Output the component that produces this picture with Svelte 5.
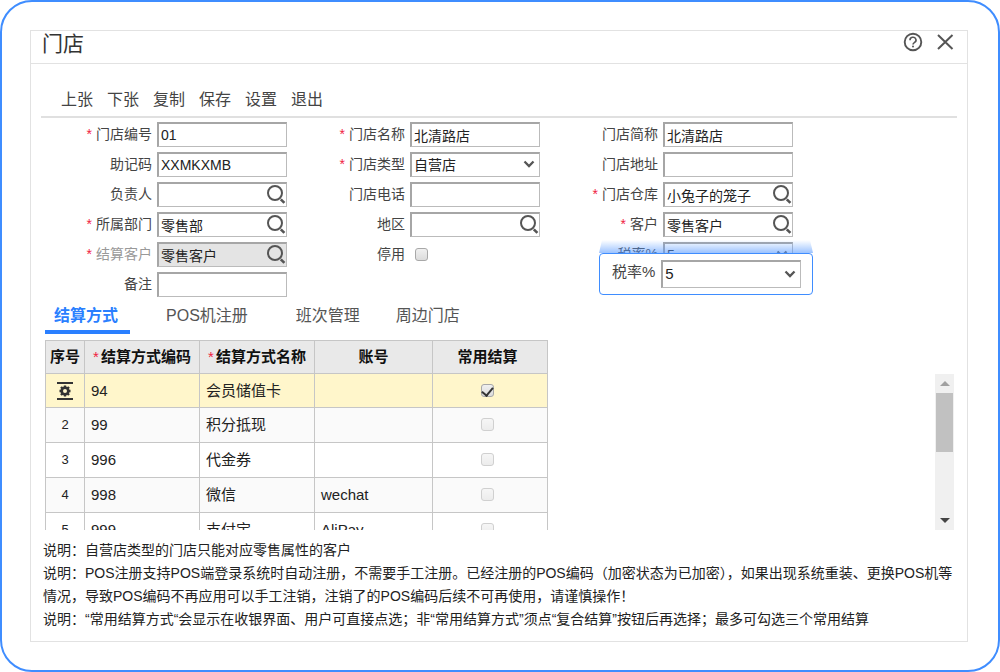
<script>
  const columns = [
    [
      { id: 'code', label: '门店编号', required: true, value: '01', kind: 'text' },
      { id: 'memo', label: '助记码', value: 'XXMKXMB', kind: 'text' },
      { id: 'owner', label: '负责人', value: '', kind: 'lookup' },
      { id: 'dept', label: '所属部门', required: true, value: '零售部', kind: 'lookup' },
      { id: 'settle', label: '结算客户', required: true, value: '零售客户', kind: 'lookup', disabled: true },
      { id: 'remark', label: '备注', value: '', kind: 'text' }
    ],
    [
      { id: 'name', label: '门店名称', required: true, value: '北清路店', kind: 'text' },
      { id: 'type', label: '门店类型', required: true, value: '自营店', kind: 'select' },
      { id: 'phone', label: '门店电话', value: '', kind: 'text' },
      { id: 'area', label: '地区', value: '', kind: 'lookup' },
      { id: 'stopped', label: '停用', kind: 'check' }
    ],
    [
      { id: 'short', label: '门店简称', value: '北清路店', kind: 'text' },
      { id: 'address', label: '门店地址', value: '', kind: 'text' },
      { id: 'store', label: '门店仓库', required: true, value: '小兔子的笼子', kind: 'lookup' },
      { id: 'customer', label: '客户', required: true, value: '零售客户', kind: 'lookup' },
      { id: 'tax', label: '税率%', value: '5', kind: 'select' }
    ]
  ];
  const actions = ['上张', '下张', '复制', '保存', '设置', '退出'];
  const tabs = ['结算方式', 'POS机注册', '班次管理', '周边门店'];
  let active = $state(0);
  const rows = [
    { no: 1, code: '94', name: '会员储值卡', account: '', common: true },
    { no: 2, code: '99', name: '积分抵现', account: '', common: false },
    { no: 3, code: '996', name: '代金券', account: '', common: false },
    { no: 4, code: '998', name: '微信', account: 'wechat', common: false },
    { no: 5, code: '999', name: '支付宝', account: 'AliPay', common: false }
  ];
</script>

{#snippet chevron()}
  <svg class="chevron" width="12" height="8" viewBox="0 0 12 8" aria-hidden="true">
    <path d="M1.500 1.500 6 6l4.500-4.500" fill="none" stroke="#555" stroke-width="2.300" />
  </svg>
{/snippet}

<main class="frame">
  <section class="dialog">
    <header>
      <h1>门店</h1>
      <button class="icon" aria-label="帮助">
        <svg width="20" height="20" viewBox="0 0 20 20">
          <circle cx="10" cy="10" r="8.300" fill="none" stroke="#555" stroke-width="1.900" />
          <path d="M7 8.200a3 2.800 0 1 1 4.600 2.200c-1 .7-1.600 1.200-1.600 2.200" fill="none" stroke="#555" stroke-width="1.600" />
          <circle cx="10" cy="14.600" r="1" fill="#555" />
        </svg>
      </button>
      <button class="icon" aria-label="关闭">
        <svg width="20" height="20" viewBox="0 0 20 20">
          <path d="M3 3 17.500 17M17.500 3 3 17" stroke="#555" stroke-width="2" />
        </svg>
      </button>
    </header>

    <nav class="toolbar">
      {#each actions as action}
        <button>{action}</button>
      {/each}
    </nav>

    <form>
      {#each columns as fields}
        <div class="column">
          {#each fields as field}
            <div class="field">
              <label for={field.id} class:muted={field.disabled}>
                {#if field.required}<span class="star">*</span>{/if}{field.label}
              </label>
              {#if field.kind === 'check'}
                <input class="tick" type="checkbox" id={field.id} />
              {:else if field.kind === 'select'}
                <div class="box">
                  <select id={field.id}><option>{field.value}</option></select>
                  {@render chevron()}
                </div>
              {:else}
                <div class="box" class:disabled={field.disabled}>
                  <input type="text" id={field.id} value={field.value} disabled={field.disabled} />
                  {#if field.kind === 'lookup'}
                    <button type="button" class="lookup" aria-label="查找{field.label}">
                      <svg width="20" height="22" viewBox="0 0 20 22">
                        <circle cx="9" cy="9" r="7" fill="none" stroke="#555" stroke-width="2" />
                        <path d="M14.800 15.300 18.400 18.900" stroke="#555" stroke-width="2.600" />
                      </svg>
                    </button>
                  {/if}
                </div>
              {/if}
            </div>
          {/each}
          {#if fields[4].id === 'tax'}
            <div class="callout">
              <div class="beam"></div>
              <div class="lens">
                <label for="taxzoom">税率%</label>
                <div class="box">
                  <select id="taxzoom"><option>5</option></select>
                  {@render chevron()}
                </div>
              </div>
            </div>
          {/if}
        </div>
      {/each}
    </form>

    <div class="tabs" role="tablist">
      {#each tabs as tab, i}
        <button role="tab" aria-selected={active === i} class:active={active === i} onclick={() => (active = i)}>{tab}</button>
      {/each}
    </div>

    <div class="grid">
      <table>
        <colgroup>
          <col class="c-no" /><col class="c-mid" /><col class="c-mid" /><col class="c-account" /><col class="c-mid" />
        </colgroup>
        <thead>
          <tr>
            <th>序号</th>
            <th><span class="star">*</span>结算方式编码</th>
            <th><span class="star">*</span>结算方式名称</th>
            <th>账号</th>
            <th class="center">常用结算</th>
          </tr>
        </thead>
        <tbody>
          {#each rows as row, i}
            <tr class:selected={i === 0}>
              <td class="no">
                {#if i === 0}
                  <svg width="16" height="20" viewBox="0 0 16 20" role="img" aria-label="行设置">
                    <path d="M0 2H16M0 18H16" stroke="#333" stroke-width="2" />
                    <circle cx="8" cy="10" r="3.300" fill="none" stroke="#333" stroke-width="2.600" />
                    <path d="M8 4.500v2M8 13.500v2M2.500 10h2M11.500 10h2M4 6l1.600 1.600M10.400 12.400l1.600 1.600M12 6l-1.600 1.600M5.600 12.400l-1.600 1.600" stroke="#333" stroke-width="2.400" />
                  </svg>
                {:else}{row.no}{/if}
              </td>
              <td>{row.code}</td>
              <td>{row.name}</td>
              <td>{row.account}</td>
              <td class="center">
                <input class="tick" class:faint={!row.common} type="checkbox" checked={row.common} aria-label="常用结算 {row.name}" />
              </td>
            </tr>
          {/each}
        </tbody>
      </table>
      <div class="scrollbar">
        <button aria-label="向上滚动"><svg width="10" height="5" viewBox="0 0 10 5"><path d="M5 0 10 5H0z" fill="#a0a0a0" /></svg></button>
        <div class="track"><div class="thumb"></div></div>
        <button aria-label="向下滚动"><svg width="10" height="5" viewBox="0 0 10 5"><path d="M0 0H10L5 5z" fill="#444" /></svg></button>
      </div>
    </div>

    <footer>
      <p>说明：自营店类型的门店只能对应零售属性的客户</p>
      <p>说明：POS注册支持POS端登录系统时自动注册，不需要手工注册。已经注册的POS编码（加密状态为已加密），如果出现系统重装、更换POS机等<br />情况，导致POS编码不再应用可以手工注销，注销了的POS编码后续不可再使用，请谨慎操作！</p>
      <p>说明：“常用结算方式“会显示在收银界面、用户可直接点选；非“常用结算方式”须点“复合结算”按钮后再选择；最多可勾选三个常用结算</p>
    </footer>
  </section>
</main>

<style>
  :global(body) {
    margin: 0;
    background: #fff;
  }
  .frame,
  .frame * {
    box-sizing: border-box;
  }
  .frame {
    min-height: 100vh;
    padding: 28px 30px 28px 28px;
    border: 2px solid #3f8dff;
    border-radius: 32px;
    color: #222;
    font: 14px/20px 'Liberation Sans', 'Noto Sans CJK SC', sans-serif;
  }
  button {
    padding: 0;
    border: 0;
    background: none;
    color: inherit;
    font: inherit;
  }
  svg {
    display: block;
  }
  .dialog {
    padding-bottom: 10px;
    border: 1px solid #e2e2e2;
  }
  header {
    display: flex;
    align-items: center;
    gap: 12px;
    height: 33px;
    padding: 0 12px 10px 11px;
    border-bottom: 1px solid #e2e2e2;
  }
  h1 {
    flex: 1;
    margin: 0;
    padding-top: 4px;
    font-size: 21px;
    line-height: 24px;
    font-weight: 400;
    color: #333;
  }
  .toolbar {
    display: flex;
    gap: 14px;
    margin: 23px 10px 0;
    padding: 0 20px 3px;
    border-bottom: 2px solid #e0e0e0;
    color: #444;
    font-size: 16px;
    line-height: 26px;
  }
  form {
    display: flex;
    padding: 4px 0 0 3px;
  }
  .column {
    display: flex;
    flex-direction: column;
    gap: 5px;
    width: 253px;
    position: relative;
  }
  .field {
    display: flex;
    align-items: center;
    gap: 5px;
    height: 25px;
  }
  .field label {
    width: 118px;
    padding-bottom: 2px;
    text-align: right;
    white-space: nowrap;
  }
  label {
    color: #444;
  }
  label.muted {
    color: #999;
  }
  .star {
    margin-right: 4px;
    color: #f0213f;
    font-weight: 400;
  }
  .box {
    display: flex;
    align-items: center;
    position: relative;
    width: 130px;
    height: 25px;
    border: 1px solid #bbb;
    border-top: 2px solid #a6a6a6;
    border-left: 2px solid #a6a6a6;
    background: #fff;
  }
  .box.disabled {
    background: #e4e4e4;
  }
  .box input,
  .box select {
    flex: 1;
    min-width: 0;
    height: 22px;
    margin: 0;
    padding: 0 2px;
    border: 0;
    outline: 0;
    appearance: none;
    background: transparent;
    color: #222;
    font: inherit;
    opacity: 1;
  }
  .chevron {
    position: absolute;
    right: 4px;
    top: 6px;
    pointer-events: none;
  }
  .tick {
    display: inline-grid;
    place-items: center;
    flex: none;
    width: 13px;
    height: 13px;
    margin: 0;
    border: 1px solid #a8a8a8;
    border-radius: 3px;
    appearance: none;
    background: linear-gradient(#f0f0f0, #dcdcdc);
    vertical-align: middle;
  }
  .field .tick {
    margin-left: 5px;
  }
  .tick.faint {
    border-color: #d0d0d0;
    background: linear-gradient(#f6f6f6, #ececec);
  }
  .tick:checked::after {
    content: '';
    width: 5px;
    height: 9px;
    margin-bottom: 3px;
    border: solid #333;
    border-width: 0 2px 2px 0;
    transform: rotate(40deg);
  }
  .callout {
    position: absolute;
    left: 59px;
    top: 118px;
    width: 214px;
  }
  .beam {
    height: 13px;
    background: linear-gradient(rgba(90, 155, 255, 0), rgba(90, 155, 255, 0.6));
    clip-path: polygon(3px 0, 211px 0, 214px 100%, 0 100%);
  }
  .lens {
    display: flex;
    align-items: center;
    gap: 6px;
    height: 42px;
    padding: 0 11px 0 12px;
    border: 1px solid #3f8dff;
    border-radius: 4px;
    background: #fff;
    font-size: 15px;
  }
  .lens label {
    padding-bottom: 4px;
  }
  .lens .box {
    flex: 1;
    height: 28px;
  }
  .lens select {
    padding-bottom: 2px;
  }
  .lens .chevron {
    top: 8px;
  }
  .tabs {
    display: flex;
    gap: 27px;
    padding: 3px 14px 0;
    color: #555;
    font-size: 16px;
    line-height: 28px;
  }
  .tabs button {
    padding: 2px 12px 0 9px;
    border-bottom: 4px solid transparent;
  }
  .tabs button:last-child {
    margin-left: -12px;
  }
  .tabs .active {
    border-color: #2a7fff;
    color: #2a7fff;
    font-weight: 700;
  }
  .grid {
    display: flex;
    justify-content: space-between;
    align-items: flex-start;
    height: 190px;
    margin: 6px 13px 0 14px;
    overflow: hidden;
  }
  table {
    width: 503px;
    border-collapse: collapse;
    table-layout: fixed;
    font-size: 15px;
  }
  .c-no {
    width: 39px;
  }
  .c-mid {
    width: 115px;
  }
  .c-account {
    width: 118px;
  }
  th,
  td {
    height: 35px;
    padding: 0 6px;
    border: 1px solid #c6c6c6;
    line-height: 20px;
    white-space: nowrap;
  }
  th {
    height: 33px;
    padding: 0;
    background: #e9e9e9;
    color: #111;
  }
  th .star {
    margin-right: 2px;
  }
  tbody tr:nth-child(even) {
    background: #fafafa;
  }
  .selected {
    background: #fff6cb;
  }
  .selected td {
    height: 34px;
  }
  .no {
    padding: 0;
    text-align: center;
    font-size: 13px;
  }
  .no svg {
    margin: 0 auto;
  }
  .center {
    padding: 0 5px 0 0;
    text-align: center;
  }
  td.center {
    padding-bottom: 3px;
  }
  .scrollbar {
    display: flex;
    flex-direction: column;
    width: 19px;
    height: 156px;
    margin-top: 34px;
    background: #f0f0f0;
  }
  .scrollbar button {
    display: grid;
    place-items: center;
    height: 19px;
  }
  .track {
    flex: 1;
    padding: 0 1px;
  }
  .thumb {
    height: 50%;
    background: #c1c1c1;
  }
  footer {
    padding: 9px 0 0 12px;
    line-height: 23px;
    white-space: nowrap;
  }
  p {
    margin: 0;
  }
</style>
